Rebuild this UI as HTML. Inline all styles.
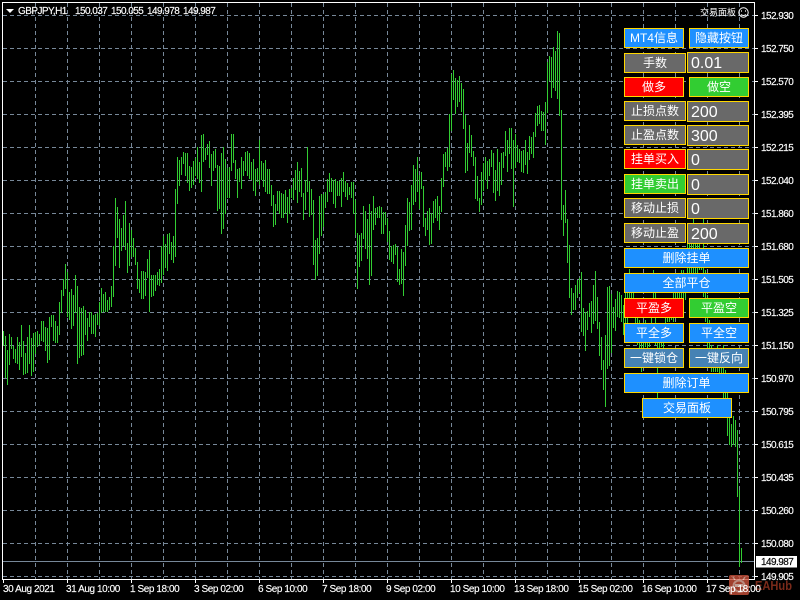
<!DOCTYPE html>
<html lang="zh"><head><meta charset="utf-8"><title>GBPJPY,H1</title>
<style>
html,body{margin:0;padding:0;background:#000;width:800px;height:600px;overflow:hidden}
svg{position:absolute;left:0;top:0}
text{font-family:"Liberation Sans",sans-serif;font-size:10px;fill:#fff;stroke:#fff;stroke-width:.15px}
.p{letter-spacing:-.55px}
.d{letter-spacing:-.42px}
.b{position:absolute;box-sizing:border-box;border:1px solid #ffd700;color:#fff;text-align:center;font-family:"Liberation Sans","WenQuanYi Zen Hei","Noto Sans CJK SC",sans-serif;font-size:12px;line-height:19px;white-space:nowrap}
.u{background:#1e90ff}.g{background:#696969}.r{background:#f00}.l{background:#32cd32}.s{background:#4682b4}
.e{background:#696969;text-align:left;padding-left:3px;font-size:16px;line-height:21px}
.w1{left:624px;width:60px}.w2{left:689px;width:60px}.w3{left:624px;width:62px}.w4{left:687px;width:62px}.w5{left:624px;width:125px}
</style></head><body>
<svg width="800" height="600" viewBox="0 0 800 600">
<rect width="800" height="600" fill="#000"/>
<g stroke="#778899" stroke-width="1" stroke-dasharray="4 3" fill="none">
<path d="M3 15.5H754M3 48.5H754M3 81.5H754M3 114.5H754M3 147.5H754M3 180.5H754M3 213.5H754M3 246.5H754M3 279.5H754M3 312.5H754M3 345.5H754M3 378.5H754M3 411.5H754M3 444.5H754M3 477.5H754M3 510.5H754M3 543.5H754M3 576.5H754"/>
<path d="M35.5 3V579M67.5 3V579M99.5 3V579M131.5 3V579M163.5 3V579M195.5 3V579M227.5 3V579M259.5 3V579M291.5 3V579M323.5 3V579M355.5 3V579M387.5 3V579M419.5 3V579M451.5 3V579M483.5 3V579M515.5 3V579M547.5 3V579M579.5 3V579M611.5 3V579M643.5 3V579M675.5 3V579M707.5 3V579M739.5 3V579"/>
</g>
<path d="M3 561.5H754" stroke="#778899" stroke-width="1"/>
<g transform="translate(.5 0)" shape-rendering="crispEdges">
<path fill="none" stroke="#32cd32" stroke-width="1" d="M3 331V346M5 336V378M7 350V385M9 334V365M11 337V349M13 346V359M15 349V363M17 337V364M19 342V370M21 325V357M23 341V375M25 353V374M27 337V373M29 325V364M31 338V376M33 333V372M35 332V354M37 331V347M39 334V345M41 321V341M43 321V342M45 327V351M47 328V363M49 317V360M51 315V327M53 315V341M55 321V343M57 326V343M59 302V335M61 290V313M63 279V296M65 264V289M67 272V317M69 292V320M71 289V329M73 295V326M75 275V313M77 286V364M79 307V358M81 308V356M83 306V355M85 310V335M87 318V341M89 312V327M91 312V334M93 315V334M95 314V337M97 313V325M99 302V326M101 288V313M103 294V312M105 292V312M107 300V312M109 297V310M111 286V307M113 246V297M115 198V266M117 207V238M119 219V268M121 228V251M123 215V246M125 201V250M127 243V273M129 223V266M131 230V257M133 238V257M135 248V265M137 262V289M139 279V293M141 271V299M143 271V299M145 272V296M147 259V278M149 250V312M151 275V297M153 275V296M155 275V291M157 272V285M159 269V286M161 246V283M163 236V275M165 244V268M167 234V271M169 233V254M171 242V260M173 236V263M175 189V257M177 157V204M179 160V186M181 157V175M183 152V164M185 153V176M187 153V183M189 166V191M191 167V188M193 161V185M195 158V176M197 147V179M199 162V183M201 135V192M203 134V162M205 148V160M207 144V155M209 141V168M211 154V186M213 151V171M215 149V168M217 165V211M219 166V209M221 153V234M223 147V229M225 159V214M227 168V198M229 167V198M231 134V171M233 134V163M235 160V179M237 169V198M239 168V182M241 157V189M243 161V176M245 152V171M247 151V176M249 153V179M251 162V180M253 159V191M255 169V196M257 168V182M259 140V185M261 161V180M263 163V187M265 160V192M267 169V194M269 169V194M271 185V206M273 195V227M275 204V225M277 191V211M279 191V214M281 193V218M283 194V218M285 190V214M287 197V223M289 189V214M291 188V198M293 178V200M295 170V190M297 162V203M299 171V192M301 168V197M303 193V220M305 180V210M307 147V192M309 181V217M311 189V215M313 200V265M315 240V280M317 238V276M319 196V254M321 194V236M323 194V227M325 192V208M327 179V202M329 173V192M331 178V192M333 180V204M335 179V208M337 181V196M339 181V196M341 178V207M343 172V192M345 181V197M347 183V200M349 187V195M351 182V198M353 182V214M355 200V235M357 233V289M359 235V267M361 233V261M363 206V239M365 211V249M367 219V259M369 204V285M371 211V276M373 196V230M375 208V225M377 207V218M379 206V218M381 207V234M383 212V234M385 212V225M387 218V242M389 231V260M391 246V262M393 245V264M395 244V255M397 247V282M399 269V285M401 249V284M403 252V296M405 225V266M407 198V246M409 202V231M411 185V230M413 165V205M415 169V202M417 157V192M419 175V209M421 172V189M423 186V227M425 218V236M427 211V230M429 208V245M431 213V244M433 201V223M435 199V218M437 196V221M439 206V230M441 178V212M443 154V187M445 152V167M447 148V171M449 114V167M451 74V131M453 70V100M455 78V114M457 80V107M459 76V102M461 83V112M463 89V129M465 115V173M467 143V171M469 125V153M471 135V157M473 151V166M475 157V199M477 176V201M479 198V212M481 172V205M483 163V191M485 157V180M487 161V189M489 159V176M491 150V167M493 153V193M495 170V201M497 149V191M499 162V196M501 153V185M503 152V168M505 131V156M507 140V172M509 128V154M511 128V169M513 140V207M515 134V168M517 145V162M519 149V163M521 151V172M523 150V173M525 140V165M527 152V174M529 136V160M531 137V154M533 132V158M535 113V137M537 106V126M539 105V124M541 111V131M543 112V131M545 102V145M547 62V113M549 56V81M551 57V98M553 47V88M555 51V91M557 31V99M559 33V116M561 110V220M563 205V236M565 190V223M567 219V263M569 245V298M571 288V315M573 293V310M575 285V310M577 280V298M579 278V293M581 272V332M583 308V336M585 312V351M587 311V330M589 303V317M591 301V333M593 285V324M595 271V321M597 297V329M599 322V356M601 337V370M603 360V390M605 335V407M607 287V369M609 286V366M611 294V353M613 307V328M615 299V331M617 291V317M619 292V318M621 295V322M623 305V335M625 292V330M627 290V328M629 269V318M631 275V312M633 285V305M635 300V330M637 310V345M639 320V348M641 325V372M643 322V348M645 320V347M647 330V348M649 335V347M651 310V330M653 270V310M655 290V345M657 340V398M659 325V348M661 330V347M663 335V348M665 300V330M667 300V322M669 310V322M671 310V320M673 290V322M675 280V310M677 290V298M679 290V298M681 270V310M683 270V300M685 280V300M687 243V290M689 243V280M691 240V280M693 218V280M695 240V280M697 240V275M699 243V270M701 250V270M703 218V297M705 270V322M707 295V348M709 320V348M711 345V372M713 350V372M715 348V372M717 345V372M719 365V374M721 360V373M723 345V398M725 370V398M727 385V436M729 418V445M731 424V447M733 416V445M735 420V447M737 430V497M739 490V567M741 548V563"/>
</g>
<rect x="2" y="2" width="752" height="577" fill="none" stroke="#fff" stroke-width="1" transform="translate(.5 .5)" shape-rendering="crispEdges"/>
<path stroke="#fff" stroke-width="1" shape-rendering="crispEdges" d="M755 15.5h3M755 48.5h3M755 81.5h3M755 114.5h3M755 147.5h3M755 180.5h3M755 213.5h3M755 246.5h3M755 279.5h3M755 312.5h3M755 345.5h3M755 378.5h3M755 411.5h3M755 444.5h3M755 477.5h3M755 510.5h3M755 543.5h3M755 576.5h3M3.5 580v3M67.5 580v3M131.5 580v3M195.500 580v3M259.5 580v3M323.5 580v3M387.5 580v3M451.5 580v3M515.5 580v3M579.5 580v3M643.5 580v3M707.5 580v3"/>
<g opacity=".8">
<rect x="729" y="575" width="20" height="20" rx="2" fill="#c9503a"/>
<circle cx="739" cy="586" r="5.500" fill="none" stroke="#e8b0a0" stroke-width="2"/>
<path d="M733 577l2 3M745 577l-2 3" stroke="#e8b0a0" stroke-width="1.500"/>
<rect x="735" y="584" width="8" height="3" fill="#f0c8bc"/>
</g>
<text x="755" y="590" textLength="37" lengthAdjust="spacingAndGlyphs" style="fill:#7a2a1a;stroke:none;font-weight:bold;font-size:13px">EAHub</text>
<path d="M6 9h8l-4 4z" fill="#fff"/>
<text x="18" y="14" class="p">GBPJPY,H1</text>
<text x="75" y="14" class="p">150.037</text><text x="111" y="14" class="p">150.055</text><text x="147" y="14" class="p">149.978</text><text x="183" y="14" class="p">149.987</text>
<text x="761" y="19" class="p">152.930</text><text x="761" y="52" class="p">152.750</text><text x="761" y="85" class="p">152.570</text><text x="761" y="118" class="p">152.395</text><text x="761" y="151" class="p">152.215</text><text x="761" y="184" class="p">152.040</text><text x="761" y="217" class="p">151.860</text><text x="761" y="250" class="p">151.680</text><text x="761" y="283" class="p">151.505</text><text x="761" y="316" class="p">151.325</text><text x="761" y="349" class="p">151.150</text><text x="761" y="382" class="p">150.970</text><text x="761" y="415" class="p">150.795</text><text x="761" y="448" class="p">150.615</text><text x="761" y="481" class="p">150.435</text><text x="761" y="514" class="p">150.260</text><text x="761" y="547" class="p">150.080</text><text x="761" y="580" class="p">149.905</text>
<rect x="756" y="556" width="41" height="11.500" fill="#fff"/>
<text x="761" y="565" class="p" style="fill:#000;stroke:#000">149.987</text>
<text x="3" y="592" class="d">30 Aug 2021</text><text x="66" y="592" class="d">31 Aug 10:00</text><text x="130" y="592" class="d">1 Sep 18:00</text><text x="194" y="592" class="d">3 Sep 02:00</text><text x="258" y="592" class="d">6 Sep 10:00</text><text x="322" y="592" class="d">7 Sep 18:00</text><text x="386" y="592" class="d">9 Sep 02:00</text><text x="450" y="592" class="d">10 Sep 10:00</text><text x="514" y="592" class="d">13 Sep 18:00</text><text x="578" y="592" class="d">15 Sep 02:00</text><text x="642" y="592" class="d">16 Sep 10:00</text><text x="706" y="592" class="d">17 Sep 18:00</text>
<text x="700" y="15.500" style="font-family:'Liberation Sans','WenQuanYi Zen Hei','Noto Sans CJK SC',sans-serif;font-size:9px;stroke:none">交易面板</text>
<circle cx="743.500" cy="12.500" r="4.700" fill="none" stroke="#fff" stroke-width="1"/>
<path d="M741 11h1M745 11h1" stroke="#fff" stroke-width="1.200"/>
<path d="M741 14.500q2.500 2 5 0" stroke="#fff" stroke-width="1" fill="none"/>
</svg>
<div class="b u w1" style="top:28px;height:20px">MT4信息</div><div class="b u w2" style="top:28px;height:20px">隐藏按钮</div>
<div class="b g w3" style="top:53px;height:20px">手数</div><div class="b e w4" style="top:52px;height:21px">0.01</div>
<div class="b r w1" style="top:77px;height:20px">做多</div><div class="b l w2" style="top:77px;height:20px">做空</div>
<div class="b g w3" style="top:101px;height:20px">止损点数</div><div class="b e w4" style="top:101px;height:21px">200</div>
<div class="b g w3" style="top:125px;height:20px">止盈点数</div><div class="b e w4" style="top:125px;height:21px">300</div>
<div class="b r w3" style="top:149px;height:20px">挂单买入</div><div class="b e w4" style="top:149px;height:21px">0</div>
<div class="b l w3" style="top:174px;height:20px">挂单卖出</div><div class="b e w4" style="top:174px;height:21px">0</div>
<div class="b g w3" style="top:198px;height:20px">移动止损</div><div class="b e w4" style="top:198px;height:21px">0</div>
<div class="b g w3" style="top:223px;height:20px">移动止盈</div><div class="b e w4" style="top:223px;height:21px">200</div>
<div class="b u w5" style="top:248px;height:20px">删除挂单</div>
<div class="b u w5" style="top:273px;height:20px">全部平仓</div>
<div class="b r w1" style="top:298px;height:20px">平盈多</div><div class="b l w2" style="top:298px;height:20px">平盈空</div>
<div class="b u w1" style="top:323px;height:20px">平全多</div><div class="b u w2" style="top:323px;height:20px">平全空</div>
<div class="b s w1" style="top:348px;height:20px">一键锁仓</div><div class="b s w2" style="top:348px;height:20px">一键反向</div>
<div class="b u w5" style="top:373px;height:20px">删除订单</div>
<div class="b u" style="left:642px;width:90px;top:398px;height:20px">交易面板</div>
</body></html>
